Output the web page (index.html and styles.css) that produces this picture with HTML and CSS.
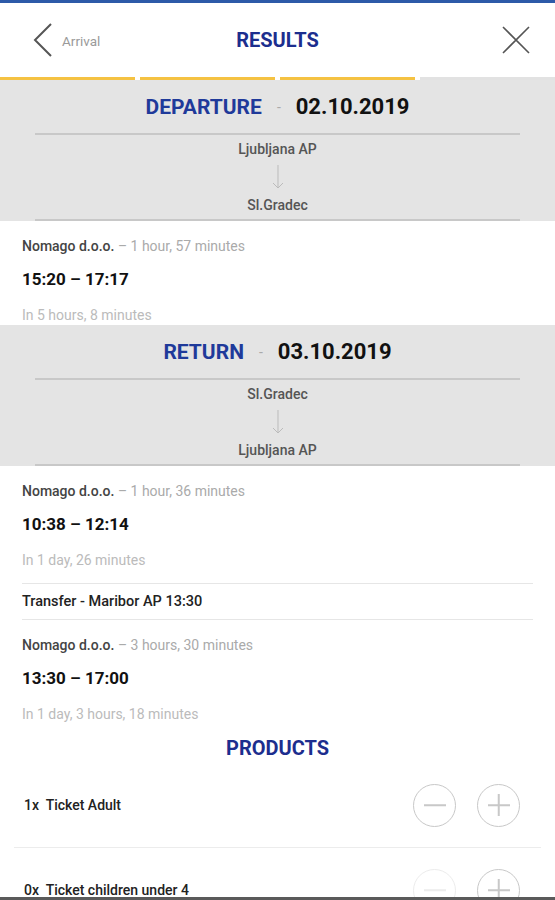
FILE: index.html
```html
<!DOCTYPE html>
<html lang="en">
<head>
  <meta charset="UTF-8" />
  <meta name="viewport" content="width=device-width, initial-scale=1.0"/>
  <title>Results</title>
  <link rel="stylesheet" href="styles.css">
</head>
<body>

  <header class="topbar">
    <div class="topbar-left">
      <svg class="back-icon" width="20" height="36" viewBox="0 0 20 36">
        <path d="M18 2 L2 18 L18 34" fill="none" stroke="#555" stroke-width="2"/>
      </svg>
      <span class="back-label">Arrival</span>
    </div>
    <h1 class="topbar-title">RESULTS</h1>
    <div class="topbar-right">
      <svg width="28" height="28" viewBox="0 0 28 28">
        <path d="M1 1 L27 27 M27 1 L1 27" fill="none" stroke="#555" stroke-width="1.6"/>
      </svg>
    </div>
  </header>

  <div class="steps">
    <span class="step done"></span>
    <span class="step done"></span>
    <span class="step done"></span>
    <span class="step"></span>
  </div>

  <!-- Departure -->
  <section class="route">
    <div class="route-head">
      <span class="route-kind">DEPARTURE</span>
      <span class="route-sep">-</span>
      <span class="route-date">02.10.2019</span>
    </div>
    <div class="route-stops">
      <div class="stop">Ljubljana AP</div>
      <svg class="stop-arrow" width="12" height="28" viewBox="0 0 12 28">
        <path d="M6 2 V25 M1 20 L6 25 L11 20" fill="none" stroke="#bbb" stroke-width="1"/>
      </svg>
      <div class="stop">Sl.Gradec</div>
    </div>
  </section>

  <div class="trip">
    <div class="trip-carrier"><b>Nomago d.o.o.</b> – 1 hour, 57 minutes</div>
    <div class="trip-time">15:20 – 17:17</div>
    <div class="trip-in">In 5 hours, 8 minutes</div>
  </div>

  <!-- Return -->
  <section class="route">
    <div class="route-head">
      <span class="route-kind">RETURN</span>
      <span class="route-sep">-</span>
      <span class="route-date">03.10.2019</span>
    </div>
    <div class="route-stops">
      <div class="stop">Sl.Gradec</div>
      <svg class="stop-arrow" width="12" height="28" viewBox="0 0 12 28">
        <path d="M6 2 V25 M1 20 L6 25 L11 20" fill="none" stroke="#bbb" stroke-width="1"/>
      </svg>
      <div class="stop">Ljubljana AP</div>
    </div>
  </section>

  <div class="trip">
    <div class="trip-carrier"><b>Nomago d.o.o.</b> – 1 hour, 36 minutes</div>
    <div class="trip-time">10:38 – 12:14</div>
    <div class="trip-in">In 1 day, 26 minutes</div>
  </div>

  <div class="transfer">Transfer - Maribor AP 13:30</div>

  <div class="trip">
    <div class="trip-carrier"><b>Nomago d.o.o.</b> – 3 hours, 30 minutes</div>
    <div class="trip-time">13:30 – 17:00</div>
    <div class="trip-in">In 1 day, 3 hours, 18 minutes</div>
  </div>

  <h2 class="products-title">PRODUCTS</h2>

  <div class="product">
    <span class="product-name">1x&nbsp; Ticket Adult</span>
    <div class="counter">
      <span class="count-btn minus"></span>
      <span class="count-btn plus"></span>
    </div>
  </div>

  <div class="product">
    <span class="product-name">0x&nbsp; Ticket children under 4</span>
    <div class="counter">
      <span class="count-btn minus disabled"></span>
      <span class="count-btn plus"></span>
    </div>
  </div>

  <div class="bottom-edge"></div>

</body>
</html>
```

FILE: styles.css
```css
body {
  margin: 0;
  font-family: Roboto, "Liberation Sans", Arial, sans-serif;
  background: #fff;
  color: #222;
  border-top: 3px solid #2d5aa8;
}

.topbar {
  display: grid;
  grid-template-columns: 1fr auto 1fr;
  align-items: center;
  height: 74px;
}

.topbar-left {
  display: flex;
  align-items: center;
  padding-left: 33px;
  gap: 9px;
}

.back-icon {
  display: block;
}

.back-label {
  font-size: 13.5px;
  color: #9a9a9a;
  margin-top: 2px;
}

.topbar-title {
  margin: 0;
  font-size: 20px;
  font-weight: 700;
  color: #1c2e8e;
}

.topbar-right {
  display: flex;
  justify-content: flex-end;
  padding-right: 25px;
}

.steps {
  display: grid;
  grid-template-columns: repeat(4, 1fr);
  gap: 5px;
  height: 3px;
}

.step {
  background: #e2e2e2;
}

.step.done {
  background: #f5c242;
}

.route {
  background: #e4e4e4;
}

.route-head {
  display: flex;
  align-items: center;
  justify-content: center;
  gap: 15px;
  height: 55px;
  margin: 0 35px;
  border-bottom: 2px solid #c8c8c8;
  box-sizing: border-box;
}

.route-kind {
  font-size: 21px;
  font-weight: 700;
  color: #1f3a9a;
}

.route-sep {
  color: #aaa;
  font-size: 14px;
}

.route-date {
  font-size: 22px;
  font-weight: 700;
  color: #111;
}

.route-stops {
  display: flex;
  flex-direction: column;
  align-items: center;
  margin: 0 35px;
  border-bottom: 2px solid #c8c8c8;
}

.stop {
  font-size: 14px;
  font-weight: 500;
  color: #555;
  line-height: 28px;
}

.stop-arrow {
  display: block;
}

.trip {
  padding: 15px 22px 0;
}

.trip-carrier {
  font-size: 14px;
  line-height: 20px;
  color: #aaa;
}

.trip-carrier b {
  font-weight: 500;
  color: #444;
}

.trip-time {
  margin-top: 10px;
  font-size: 17px;
  font-weight: 700;
  line-height: 26px;
  color: #111;
}

.trip-in {
  margin-top: 13px;
  font-size: 14px;
  line-height: 20px;
  color: #bbb;
}

.transfer {
  margin: 13px 22px 0;
  padding: 8px 0 7px;
  border-top: 1px solid #e6e6e6;
  border-bottom: 1px solid #e6e6e6;
  font-size: 14.5px;
  font-weight: 500;
  line-height: 20px;
  color: #222;
}

.products-title {
  margin: 9px 0 0;
  text-align: center;
  font-size: 20px;
  font-weight: 700;
  line-height: 30px;
  color: #1c2e8e;
}

.product {
  display: flex;
  align-items: center;
  justify-content: space-between;
  height: 84px;
  margin: 0 14px;
  padding: 0 21px 0 10px;
  border-bottom: 1px solid #ececec;
}

.product-name {
  font-size: 14px;
  font-weight: 500;
  color: #222;
}

.counter {
  display: flex;
  gap: 21px;
}

.count-btn {
  position: relative;
  width: 43px;
  height: 43px;
  box-sizing: border-box;
  border: 1.5px solid #c8c8c8;
  border-radius: 50%;
}

.count-btn::before,
.plus::after {
  content: "";
  position: absolute;
  left: 50%;
  top: 50%;
  width: 22px;
  height: 1.5px;
  background: #c8c8c8;
  transform: translate(-50%, -50%);
}

.plus::after {
  transform: translate(-50%, -50%) rotate(90deg);
}

.count-btn.disabled {
  border-color: #ececec;
}

.count-btn.disabled::before {
  background: #ececec;
}

.bottom-edge {
  position: fixed;
  left: 0;
  right: 0;
  bottom: 0;
  height: 3px;
  background: #5a5a5a;
}
```
